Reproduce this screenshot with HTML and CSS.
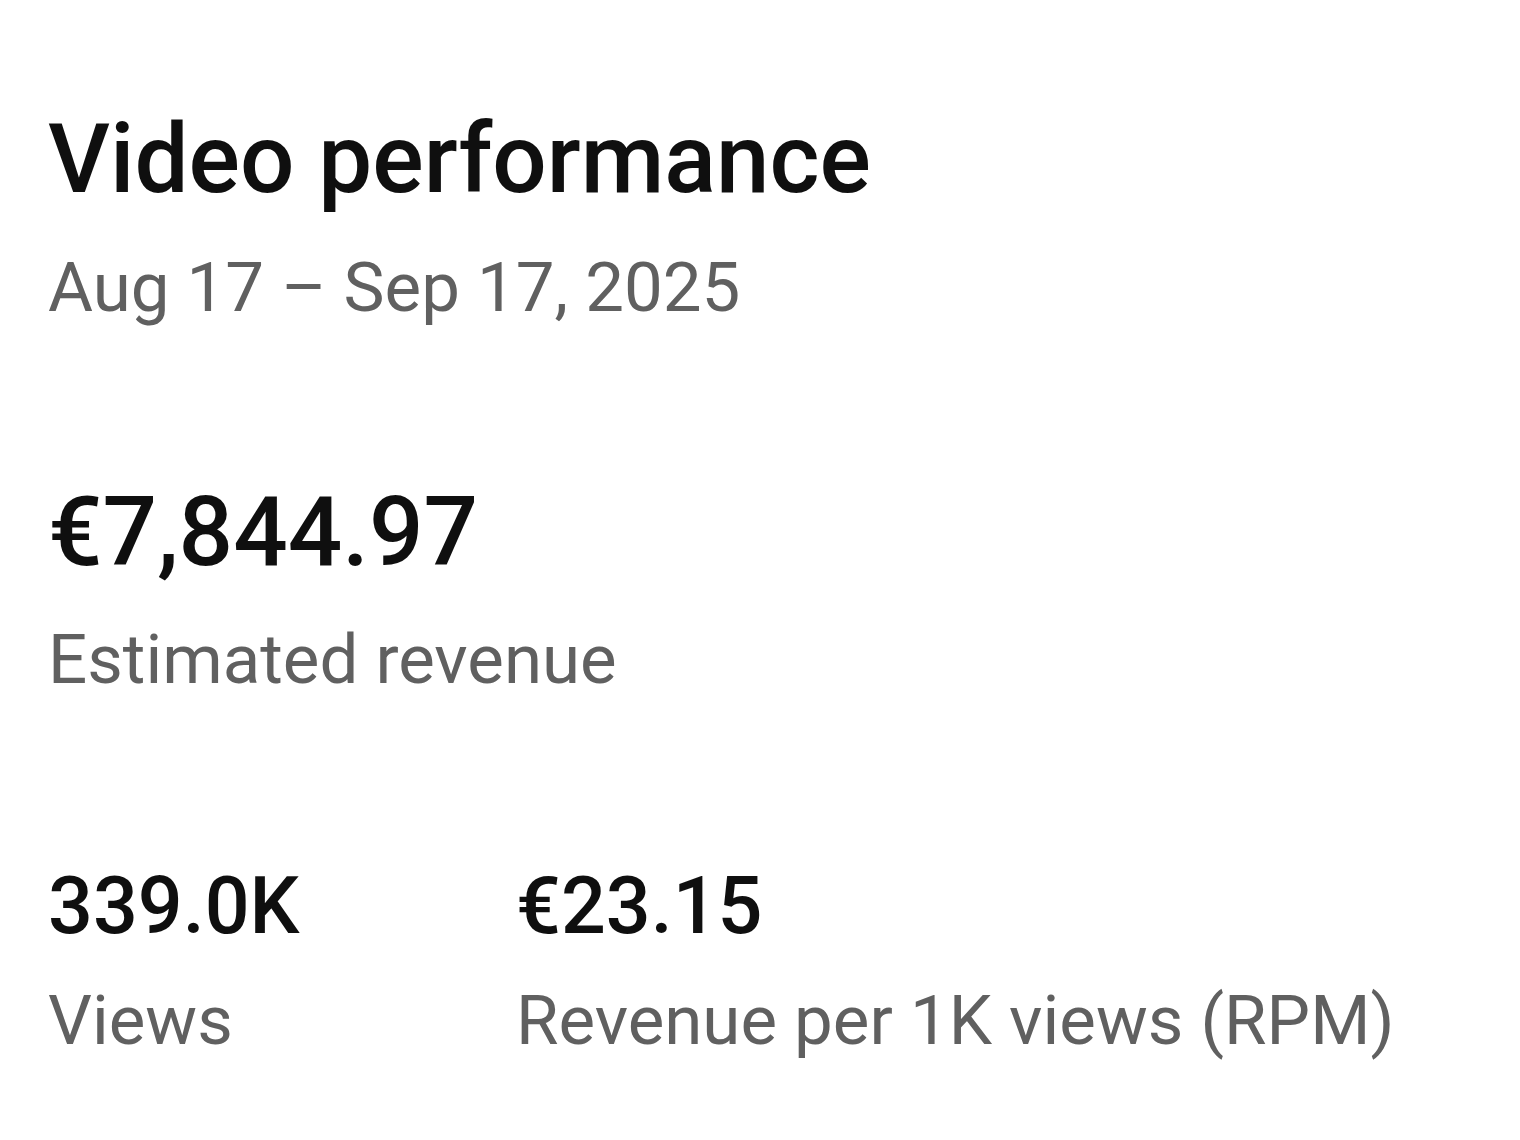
FILE: index.html
```html
<!DOCTYPE html>
<html>
<head>
<meta charset="utf-8">
<link rel="stylesheet" href="styles.css">
</head>
<body>
<div class="page">
  <h1 class="title">Video performance</h1>
  <div class="date">Aug 17 – Sep 17, 2025</div>
  <div class="main-metric">
    <div class="big-value">€7,844.97</div>
    <div class="big-label">Estimated revenue</div>
  </div>
  <div class="metrics">
    <div class="metric views">
      <div class="value">339.0K</div>
      <div class="label">Views</div>
    </div>
    <div class="metric">
      <div class="value">€23.15</div>
      <div class="label">Revenue per 1K views (RPM)</div>
    </div>
  </div>
</div>
</body>
</html>
```
FILE: styles.css
```css
html, body {
  margin: 0;
  padding: 0;
  background: #ffffff;
}
body {
  font-family: Roboto, "Noto Sans", sans-serif;
  color: #0f0f0f;
}
.page {
  padding: 101px 0 0 48px;
}
.title {
  margin: 0;
  font-size: 96px;
  font-weight: 500;
  line-height: 116px;
  color: #0f0f0f;
}
.date {
  margin-top: 30px;
  font-size: 69px;
  line-height: 82px;
  color: #606060;
}
.main-metric {
  margin-top: 145px;
}
.big-value {
  font-size: 96px;
  font-weight: 500;
  line-height: 116px;
}
.big-label {
  margin-top: 29px;
  font-size: 69px;
  line-height: 82px;
  color: #606060;
}
.metrics {
  display: flex;
  margin-top: 158px;
}
.metric .value {
  font-size: 79px;
  font-weight: 500;
  line-height: 94px;
}
.metric .label {
  margin-top: 27px;
  font-size: 69px;
  line-height: 82px;
  color: #606060;
}
.views {
  width: 468px;
}
```
